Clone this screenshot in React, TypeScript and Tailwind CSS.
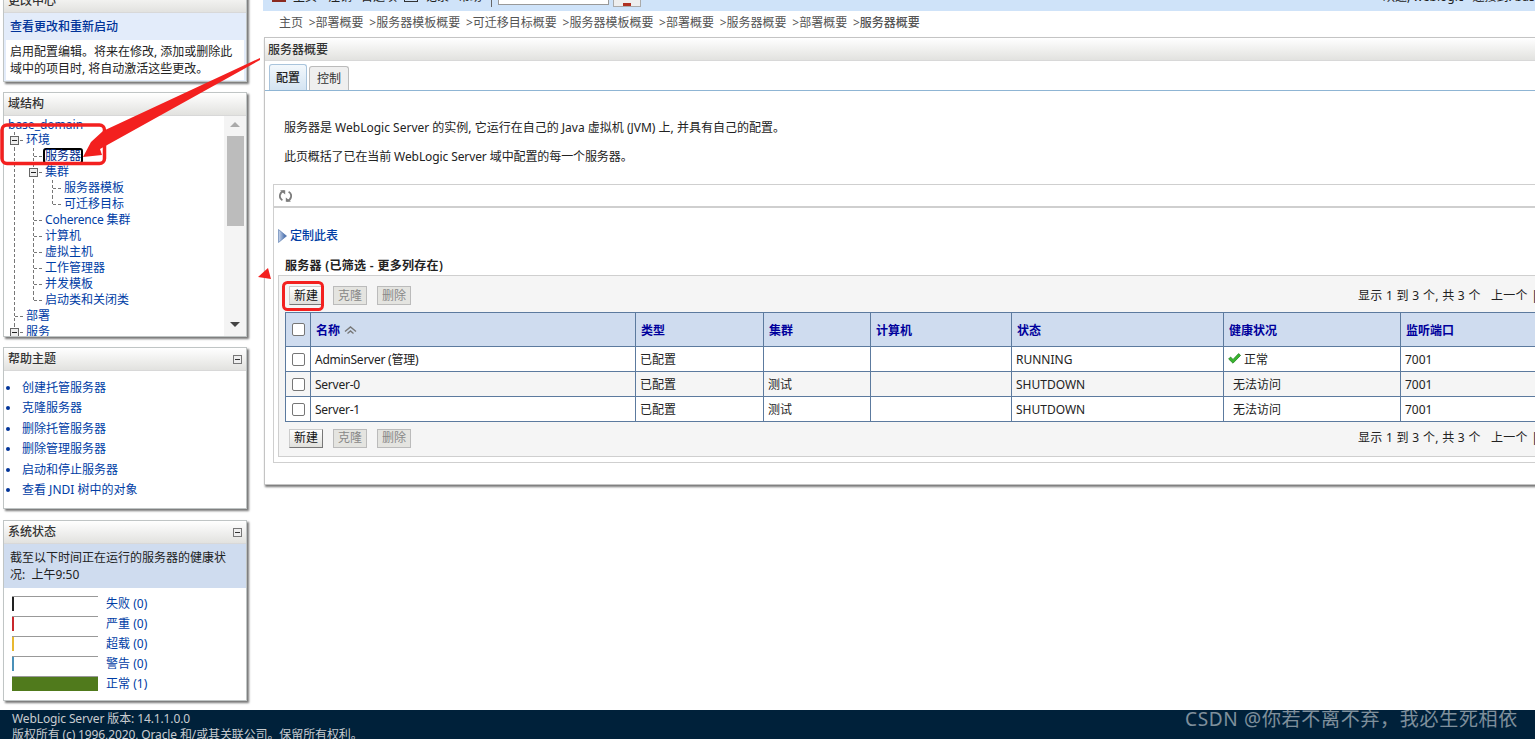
import React from "react";

const LINK = "text-[#003da5]";

function Cell({ kind }: { kind: "v" | "tee" | "elbow" | "box" | "none" }) {
  const dash = { stroke: "#777", strokeWidth: 1, strokeDasharray: "3 2", shapeRendering: "crispEdges" as const };
  return (
    <svg width="19" height="16" viewBox="0 0 19 16" className="shrink-0 block">
      {(kind === "v" || kind === "tee" || kind === "box") && <line x1="9.5" y1="0" x2="9.5" y2="16" {...dash} />}
      {kind === "elbow" && <line x1="9.5" y1="0" x2="9.5" y2="8" {...dash} />}
      {(kind === "tee" || kind === "elbow" || kind === "box") && <line x1="9.5" y1="8.5" x2="19" y2="8.5" {...dash} />}
      {kind === "box" && (
        <g shapeRendering="crispEdges">
          <rect x="5.5" y="4.5" width="8" height="8" fill="#eee" stroke="#666" />
          <line x1="7" y1="8.5" x2="12" y2="8.5" stroke="#222" />
        </g>
      )}
    </svg>
  );
}

type K = "v" | "tee" | "elbow" | "box" | "none";
const tree: { cells: K[]; label: string; sel?: boolean; tight?: boolean }[] = [
  { cells: ["box"], label: "环境" },
  { cells: ["v", "tee"], label: "服务器", sel: true },
  { cells: ["v", "box"], label: "集群" },
  { cells: ["v", "v", "tee"], label: "服务器模板" },
  { cells: ["v", "v", "elbow"], label: "可迁移目标" },
  { cells: ["v", "tee"], label: "Coherence 集群", tight: true },
  { cells: ["v", "tee"], label: "计算机" },
  { cells: ["v", "tee"], label: "虚拟主机" },
  { cells: ["v", "tee"], label: "工作管理器" },
  { cells: ["v", "tee"], label: "并发模板" },
  { cells: ["v", "elbow"], label: "启动类和关闭类" },
  { cells: ["tee"], label: "部署" },
  { cells: ["box"], label: "服务" },
];

function PanelHead({ title, collapse }: { title: string; collapse?: boolean }) {
  return (
    <div className="h-[23px] flex items-center justify-between pl-[4px] pr-[4px] bg-gradient-to-b from-white to-[#e2e2df] border-b border-[#d8d8d8] text-[#333] font-medium leading-4">
      <span>{title}</span>
      {collapse && (
        <span className="w-[9px] h-[9px] border border-[#777] bg-[#eee] flex items-center justify-center">
          <span className="w-[5px] h-px bg-[#333]" />
        </span>
      )}
    </div>
  );
}

const panel = "w-[244px] ml-[3px] border border-[#c0c5c5] bg-white shadow-[2px_2px_2px_#777] overflow-hidden";

function HealthBar({ color, label, n, full }: { color: string; label: string; n: number; full?: boolean }) {
  return (
    <div className="h-5 flex items-start">
      <div className="w-[86px] h-[15px] border-t border-[#999] flex" style={{ background: full ? color : "white" }}>
        <span className="w-[2px] h-full" style={{ background: color }} />
      </div>
      <span className={`ml-2 leading-4 ${LINK}`}>{label} ({n})</span>
    </div>
  );
}

function Btn({ label, on }: { label: string; on?: boolean }) {
  return (
    <span
      className={
        on
          ? "w-[34px] h-[19px] flex items-center justify-center border border-t-[#ccc] border-l-[#ccc] border-r-[#777] border-b-[#777] bg-gradient-to-b from-white to-[#e0e0dc] text-[#111] leading-4"
          : "w-[34px] h-[19px] flex items-center justify-center border border-[#bbb] bg-[#e4e4e0] text-[#888] leading-4"
      }
    >
      {label}
    </span>
  );
}

function Toolbar({ className }: { className: string }) {
  return (
    <div className={`w-[1256px] flex items-center justify-between pl-[10px] ${className}`}>
      <div className="flex gap-[10px]">
        <Btn label="新建" on />
        <Btn label="克隆" />
        <Btn label="删除" />
      </div>
      <div className="w-[177px] shrink-0 whitespace-pre text-[#222] leading-4 overflow-hidden tracking-[0.3px]">
        显示 1 到 3 个, 共 3 个{"   "}上一个 | 下一个
      </div>
    </div>
  );
}

function Box() {
  return <span className="block w-[13px] h-[13px] rounded-[2px] border border-[#767676] bg-white mx-auto" />;
}

const rows = [
  { name: "AdminServer (管理)", cluster: "", state: "RUNNING", health: "正常", ok: true },
  { name: "Server-0", cluster: "测试", state: "SHUTDOWN", health: "无法访问" },
  { name: "Server-1", cluster: "测试", state: "SHUTDOWN", health: "无法访问" },
];
const heads = ["类型", "集群", "计算机", "状态", "健康状况", "监听端口"];
const th = "border border-[#5c7a9e] text-left font-semibold text-[#00009c] pl-[5px] pt-[2px] leading-4";
const td = "border border-[#5c7a9e] pl-[4px] pt-[1px] leading-4 text-[#222]";
const crumbs = ["部署概要", "服务器模板概要", "可迁移目标概要", "服务器模板概要", "部署概要", "服务器概要", "部署概要"];

export default function App() {
  return (
    <div className="relative w-[1535px] h-[739px] overflow-hidden flex flex-col bg-white text-[12px] text-[#222] font-['Noto_Sans','Noto_Sans_CJK_SC',sans-serif]">
      <div className="flex-1 flex min-h-0">
        {/* left column */}
        <aside className="w-[263px] shrink-0 flex flex-col">
          <div className={`${panel} -mt-[11px]`}>
            <PanelHead title="更改中心" />
            <div className="h-[27px] bg-[#e3ecfa] pl-[6px] pt-[1px] flex items-center font-medium text-[#003399] leading-4">查看更改和重新启动</div>
            <div className="bg-[#e3ecfa] px-[2px] pb-[1px]">
              <div className="bg-white h-[40px] pl-[4px] pt-[3px] leading-[17px] text-[#222]">
                启用配置编辑。将来在修改, 添加或删除此
                <br />
                域中的项目时, 将自动激活这些更改。
              </div>
            </div>
          </div>

          <div className={`${panel} mt-[10px] h-[245px]`}>
            <PanelHead title="域结构" />
            <div className="flex h-[220px]">
              <div className="w-[220px] pt-[1px] pl-[1px] overflow-hidden">
                <div className={`h-[15px] pl-[3px] leading-4 ${LINK}`}>base_domain</div>
                {tree.map((r) => (
                  <div key={r.label} className="h-4 flex">
                    {r.cells.map((c, i) => (
                      <Cell key={i} kind={c} />
                    ))}
                    {r.sel ? (
                      <span className="h-[16px] border-2 border-black rounded-[3px] leading-[12px] bg-white text-[#002a8c]">{r.label}</span>
                    ) : (
                      <span className={`pl-[2px] leading-4 whitespace-nowrap ${LINK} ${r.tight ? "tracking-[-0.2px]" : ""}`}>{r.label}</span>
                    )}
                  </div>
                ))}
              </div>
              <div className="w-[22px] bg-[#f4f4f4] flex flex-col items-center pt-[6px] pb-[9px]">
                <span className="w-0 h-0 border-x-[5px] border-x-transparent border-b-[5px] border-b-[#aaa]" />
                <div className="w-[17px] h-[90px] bg-[#bcbcbc] mt-[9px]" />
                <span className="mt-auto w-0 h-0 border-x-[5px] border-x-transparent border-t-[5px] border-t-[#444]" />
              </div>
            </div>
          </div>

          <div className={`${panel} mt-[10px] h-[162px]`}>
            <PanelHead title="帮助主题" collapse />
            <ul className="pl-[2px] pt-[6.5px]">
              {["创建托管服务器", "克隆服务器", "删除托管服务器", "删除管理服务器", "启动和停止服务器", "查看 JNDI 树中的对象"].map((t) => (
                <li key={t} className="h-[20.5px] flex items-center leading-4">
                  <span className="w-[4px] h-[4px] rounded-full bg-[#003399] mr-[12px]" />
                  <span className={LINK}>{t}</span>
                </li>
              ))}
            </ul>
          </div>

          <div className={`${panel} mt-[11px] h-[181px]`}>
            <PanelHead title="系统状态" collapse />
            <div className="h-[44px] bg-[#cfdcef] pl-[6px] pt-[5px] leading-[17px] text-[#222]">
              截至以下时间正在运行的服务器的健康状
              <br />
              况:&nbsp;&nbsp;上午9:50
            </div>
            <div className="pl-[8px] pt-[8px]">
              <HealthBar color="#222222" label="失败" n={0} />
              <HealthBar color="#c8282c" label="严重" n={0} />
              <HealthBar color="#e8b830" label="超载" n={0} />
              <HealthBar color="#4a90b8" label="警告" n={0} />
              <HealthBar color="#507a1c" label="正常" n={1} full />
            </div>
          </div>
        </aside>

        {/* right column */}
        <main className="flex-1 min-w-0 overflow-hidden">
          <div className="h-[11px] bg-[#cfe3f9] overflow-hidden flex items-start pl-[9px] text-[#222]">
            <div className="flex items-start -mt-[11px] w-full">
              <span className="w-[14px] h-[13px] bg-[#8a2a20] mr-[7px]" />
              <span className="leading-4 whitespace-pre mr-[11px]">主页</span>
              <span className="leading-4 whitespace-pre mr-[9px]">注销</span>
              <span className="leading-4 whitespace-pre mr-[7px]">首选项</span>
              <span className="w-[14px] h-[13px] border border-[#333] mr-[7px]" />
              <span className="leading-4 whitespace-pre mr-[9px]">记录</span>
              <span className="leading-4 whitespace-pre">帮助</span>
              <span className="ml-[9px] w-px h-[18px] bg-[#666]" />
              <span className="ml-[6px] w-[111px] h-[16px] border border-[#999] bg-white" />
              <span className="ml-[4px] w-[28px] h-[18px] border border-[#aaa] bg-[#eee] flex justify-center items-end">
                <span className="w-[8px] h-[3px] bg-[#b03020]" />
              </span>
              <span className="ml-auto w-[152px] leading-4 whitespace-pre overflow-hidden flex">
                <span>欢迎, weblogic</span>
                <span className="ml-[4px] mr-[5px] w-px h-[18px] bg-[#666]" />
                <span>连接到: base_domain</span>
              </span>
            </div>
          </div>
          <div className="h-[21px] mt-[1px] mb-[4px] pl-[16px] flex items-center text-[#555] leading-4 whitespace-pre">
            <span className="mr-[2.6px]">主页</span>
            {crumbs.map((c, i) => (
              <span key={i} className="mr-[2.6px]"> &gt;{c}</span>
            ))}
            <span> &gt;<span className="font-medium">服务器概要</span></span>
          </div>

          <section className="ml-px w-[1400px] h-[448px] border border-[#c4c4c4] bg-white shadow-[1px_2px_2px_#777]">
            <div className="h-[23px] flex items-center pl-[3px] pt-[1px] bg-gradient-to-b from-white to-[#e2e2df] border-b border-[#d8d8d8] text-[#333] font-medium leading-4">服务器概要</div>
            <div className="h-[30px] flex items-end pl-[4px] gap-[2px] border-b border-[#8fb5d4]">
              <span className="w-[38px] h-[26px] flex items-center justify-center rounded-t-[3px] border border-b-0 border-[#a9c4dc] bg-gradient-to-b from-[#f3f8fc] to-[#d4e4f2] font-medium text-[#222]">配置</span>
              <span className="w-[40px] h-[24px] flex items-center justify-center rounded-t-[3px] border border-b-0 border-[#bbb] bg-[#efefef] text-[#333]">控制</span>
            </div>
            <p className="pl-[19px] mt-[29px] leading-4">服务器是 WebLogic Server 的实例, 它运行在自己的 Java 虚拟机 (JVM) 上, 并具有自己的配置。</p>
            <p className="pl-[19px] mt-[13px] leading-4 tracking-[-0.1px]">此页概括了已在当前 WebLogic Server 域中配置的每一个服务器。</p>

            <div className="ml-[8px] mt-[19px] h-[279px] border border-[#cfcfcf]">
              <div className="h-[23px] border-b-2 border-[#cfcfcf] flex items-center pl-[5px]">
                <svg width="13" height="14" viewBox="0 0 13 14" fill="none" stroke="#7d7d7d" strokeWidth="1.8">
                  <path d="M3.4 11.2A4.8 4.8 0 0 1 5.2 2.2" />
                  <path d="M9.6 2.8A4.8 4.8 0 0 1 7.8 11.8" />
                  <path d="M1 1.2h5.2v4.2z" fill="#7d7d7d" stroke="none" />
                  <path d="M12 12.8H6.8V8.6z" fill="#7d7d7d" stroke="none" />
                </svg>
              </div>
              <div className="h-[43px] pl-[4px] pt-[20px] flex items-start">
                <svg width="9" height="14" viewBox="0 0 9 14" className="mt-px">
                  <defs>
                    <linearGradient id="tri" x1="0" y1="0" x2="1" y2="0">
                      <stop offset="0" stopColor="#c9d6ec" />
                      <stop offset="1" stopColor="#2f5aa0" />
                    </linearGradient>
                  </defs>
                  <path d="M0.5 0.5L8.5 7L0.5 13.5z" fill="url(#tri)" stroke="#4a6ea8" strokeWidth="0.6" />
                </svg>
                <span className={`ml-[3px] leading-4 font-medium ${LINK}`}>定制此表</span>
              </div>
              <div className="pl-[11px] h-[24px] pt-[7px] font-semibold text-[#222] leading-4 tracking-[0.3px]">服务器 (已筛选 - 更多列存在)</div>
              <div className="ml-[4px] h-[182px] w-[1300px] border border-[#cfcfcf] bg-[#f5f5f5]">
                <Toolbar className="h-[36px] pt-[3px]" />
                <table className="ml-[6px] table-fixed border-collapse w-[1265px]">
                  <colgroup>
                    <col className="w-[25px]" />
                    <col className="w-[325px]" />
                    <col className="w-[128px]" />
                    <col className="w-[107px]" />
                    <col className="w-[141px]" />
                    <col className="w-[212px]" />
                    <col className="w-[177px]" />
                    <col className="w-[150px]" />
                  </colgroup>
                  <thead>
                    <tr className="h-[34px] bg-[#cfdcef]">
                      <th className="border border-[#5c7a9e]"><Box /></th>
                      <th className={th}>
                        <span className="inline-flex items-center gap-[4px]">
                          名称
                          <svg width="13" height="9" viewBox="0 0 13 9" fill="none" stroke="#777" strokeWidth="1.4">
                            <path d="M1 5.5L6.5 1L12 5.5" />
                            <path d="M3.5 7.5L6.5 5L9.5 7.5" />
                          </svg>
                        </span>
                      </th>
                      {heads.map((h) => (
                        <th key={h} className={th}>{h}</th>
                      ))}
                    </tr>
                  </thead>
                  <tbody>
                    {rows.map((r, i) => (
                      <tr key={r.name} className={`h-[25px] ${i === 1 ? "bg-[#f5f5f5]" : "bg-white"}`}>
                        <td className="border border-[#5c7a9e]"><Box /></td>
                        <td className={`${td} ${LINK} tracking-[-0.25px]`}>{r.name}</td>
                        <td className={td}>已配置</td>
                        <td className={td}>{r.cluster}</td>
                        <td className={td} />
                        <td className={td}>{r.state}</td>
                        <td className={td}>
                          <span className="flex items-center">
                            {r.ok ? (
                              <svg width="13" height="11" viewBox="0 0 13 11" className="mr-[3px] -mt-[2px]">
                                <path d="M0.6 6L2.6 4L5 6.4L10.6 0.6L12.6 2.4L5 10.2z" fill="#38b52e" stroke="#1d7a1a" strokeWidth="0.7" />
                              </svg>
                            ) : (
                              <span className="w-[5px]" />
                            )}
                            {r.health}
                          </span>
                        </td>
                        <td className={td}>7001</td>
                      </tr>
                    ))}
                  </tbody>
                </table>
                <Toolbar className="h-[32px]" />
              </div>
            </div>
          </section>
        </main>
      </div>

      <footer className="h-[29px] shrink-0 bg-[#00213a] text-[#c8ccd0] pl-[12px] pt-[1px] leading-[16px] overflow-hidden tracking-[-0.12px]">
        <div>WebLogic Server 版本: 14.1.1.0.0</div>
        <div>版权所有 (c) 1996,2020, Oracle 和/或其关联公司。保留所有权利。</div>
      </footer>
      <div className="absolute right-[17px] top-[706px] text-[19px] tracking-[0.7px] leading-[26px] text-white/50">CSDN @你若不离不弃，我必生死相依</div>

      {/* red annotations over the page */}
      <svg className="absolute left-0 top-0 pointer-events-none" width="1535" height="739" viewBox="0 0 1535 739">
        <rect x="2" y="125" width="102.5" height="38.5" rx="5" fill="none" stroke="#f3201f" strokeWidth="3.5" />
        <rect x="283.5" y="282.5" width="39" height="27" rx="4" fill="none" stroke="#f3201f" strokeWidth="3" />
        <polygon points="260,58 103,131 91,142 83,157 102,155 100,149 260,60" fill="#f3201f" />
        <polygon points="258,277 268,268 271,279" fill="#f3201f" />
      </svg>
    </div>
  );
}
